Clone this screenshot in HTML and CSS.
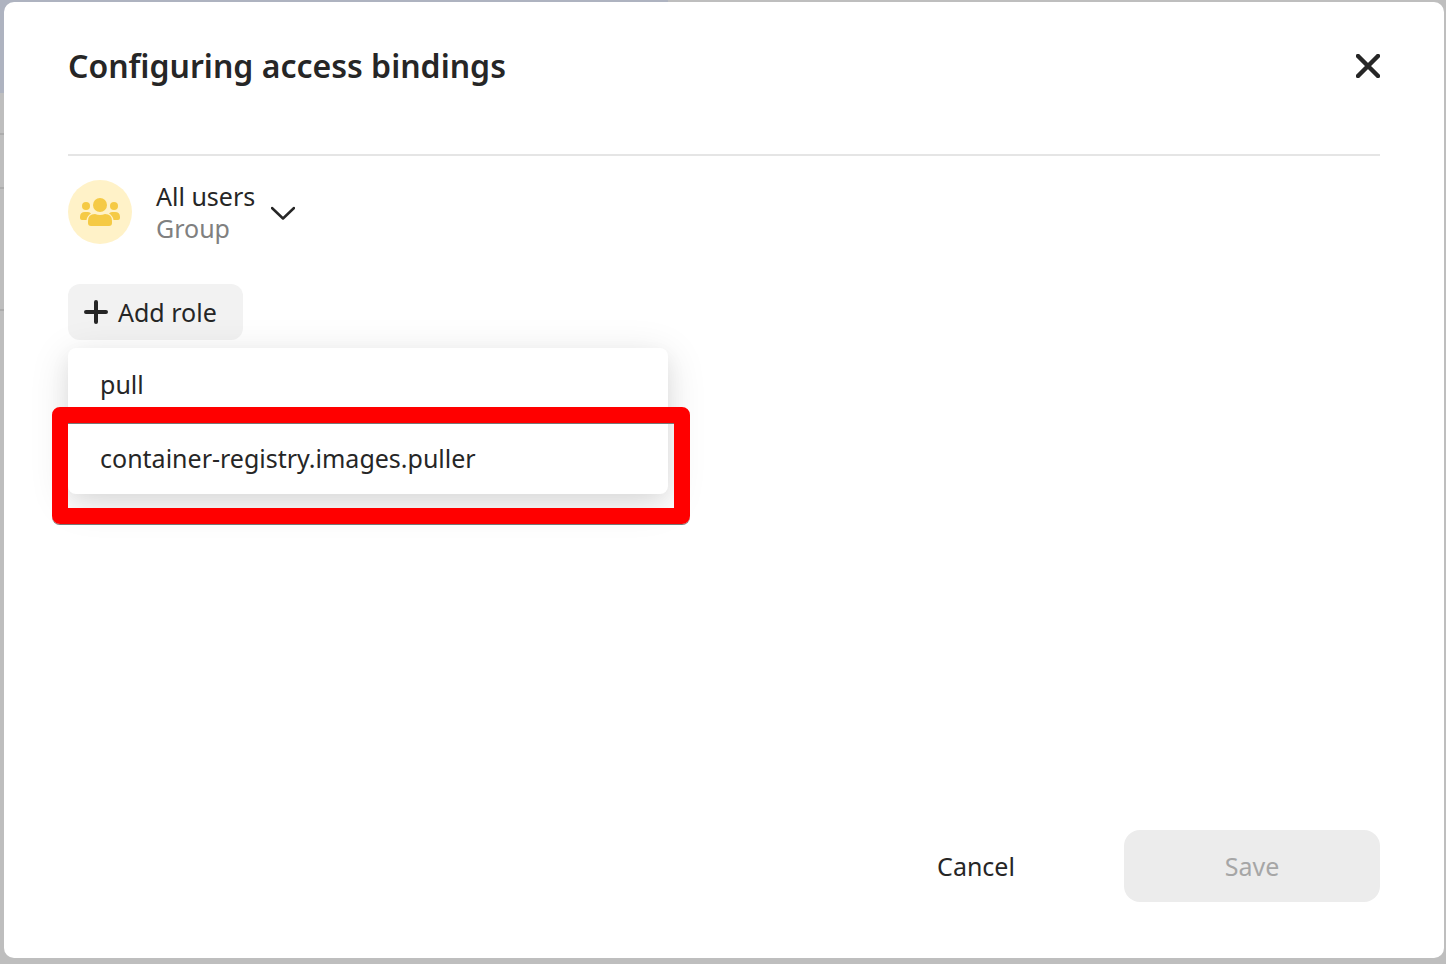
FILE: index.html
```html
<!DOCTYPE html>
<html lang="en">
<head>
<meta charset="utf-8">
<meta name="viewport" content="width=device-width, initial-scale=1">
<title>Configuring access bindings</title>
<link rel="stylesheet" href="styles.css">
</head>
<body>
<div class="backdrop" aria-hidden="true">
  <div class="backdrop-banner"></div>
  <div class="backdrop-row backdrop-row-short"></div>
  <div class="backdrop-row"></div>
  <div class="backdrop-row backdrop-row-tall"></div>
</div>
<main class="dialog" role="dialog" aria-labelledby="dialog-title">
  <header class="dialog-header">
    <h1 class="dialog-title" id="dialog-title">Configuring access bindings</h1>
    <button class="close" type="button" aria-label="Close">
      <svg width="24" height="24" viewBox="0 0 24 24" fill="none" stroke="currentColor" stroke-width="4.500" stroke-linecap="round"><path d="M2 2 22 22M22 2 2 22"/></svg>
    </button>
  </header>
  <section class="dialog-body">
    <button class="subject" type="button">
      <span class="avatar">
        <svg width="40" height="28" viewBox="0 0 40 28" fill="currentColor">
          <circle cx="6" cy="8" r="4"/><circle cx="34" cy="8" r="4"/><circle cx="20" cy="7" r="7"/>
          <path d="M5 14h3q2 0 3 1.500Q7 18 6.500 22H2q-2 0-2-2v-1q0-5 5-5Z"/>
          <path d="M35 14h-3q-2 0-3 1.500Q33 18 33.500 22H38q2 0 2-2v-1q0-5-5-5Z"/>
          <path d="M15 16q5 2 10 0 7 0 7 7v2q0 3-3 3H11q-3 0-3-3v-2q0-7 7-7Z"/>
        </svg>
      </span>
      <span class="subject-text">
        <span>All users</span>
        <span class="subject-kind">Group</span>
      </span>
      <svg class="chevron" width="24" height="18" viewBox="0 0 24 18" fill="none" stroke="currentColor" stroke-width="2.500" stroke-linecap="round" stroke-linejoin="round"><path d="M1 5 12 15.500 23 5"/></svg>
    </button>
    <div class="role-picker">
      <button class="add-role" type="button" aria-haspopup="menu" aria-expanded="true">
        <svg width="24" height="24" viewBox="0 0 24 24" fill="none" stroke="currentColor" stroke-width="4" stroke-linecap="round"><path d="M12 2v20M2 12h20"/></svg>
        Add role
      </button>
      <div class="menu" role="menu">
        <button class="menu-item" type="button" role="menuitem">pull</button>
        <button class="menu-item highlighted" type="button" role="menuitem">container-registry.images.puller</button>
      </div>
    </div>
  </section>
  <footer class="dialog-footer">
    <button class="action" type="button">Cancel</button>
    <button class="action action-save" type="button" disabled>Save</button>
  </footer>
</main>
</body>
</html>
```

FILE: styles.css
```css
* { box-sizing: border-box; }

body {
  margin: 0;
  min-height: 100vh;
  display: flex;
  padding: 2px 2px 6px 4px;
  background: #bebebe;
  color: #262626;
  font: 25px/32px "Noto Sans", "Open Sans", sans-serif;
}

button {
  margin: 0;
  padding: 0;
  border: 0;
  background: none;
  color: inherit;
  font: inherit;
  cursor: pointer;
}

svg { display: block; flex: none; }

/* Page dimmed behind the dialog */
.backdrop {
  position: absolute;
  inset: 0;
  z-index: -1;
  overflow: hidden;
}
.backdrop-banner { width: 668px; height: 93px; background: #aeb3c0; }
.backdrop-row { width: 668px; height: 54px; border-bottom: 2px solid #acacac; }
.backdrop-row-short { height: 42px; }
.backdrop-row-tall { height: 122px; }

.dialog {
  flex: 1;
  display: flex;
  flex-direction: column;
  padding: 32px 64px 56px;
  border-radius: 10px;
  background: #fff;
}

.dialog-header {
  display: flex;
  align-items: center;
  justify-content: space-between;
  padding-bottom: 56px;
  border-bottom: 2px solid #e5e5e5;
}
.dialog-title {
  margin: 0;
  font-size: 32px;
  font-weight: 600;
  line-height: 64px;
}

.dialog-body { flex: 1; padding-top: 24px; }

.subject { display: flex; align-items: center; text-align: left; }
.avatar {
  display: grid;
  place-items: center;
  width: 64px;
  height: 64px;
  margin-right: 24px;
  border-radius: 50%;
  background: #fff2c8;
  color: #f5ca45;
}
.subject-text { display: flex; flex-direction: column; }
.subject-kind { color: #808080; }
.chevron { margin-left: 16px; }

.role-picker { position: relative; margin-top: 40px; }
.add-role {
  display: flex;
  align-items: center;
  gap: 10px;
  height: 56px;
  padding: 0 26px 0 16px;
  border-radius: 12px;
  background: #f2f2f2;
}
.menu {
  position: absolute;
  top: 64px;
  left: 0;
  display: flex;
  flex-direction: column;
  gap: 2px;
  width: 600px;
  border-radius: 8px;
  background: #fff;
  box-shadow: 0 8px 40px rgba(0, 0, 0, 0.12), 0 8px 20px rgba(0, 0, 0, 0.06);
}
.menu-item { height: 72px; padding: 0 32px; text-align: left; }

.highlighted { position: relative; }
.highlighted::after {
  content: "";
  position: absolute;
  inset: -15px -22px -30px -16px;
  border: 16px solid #f00;
  border-radius: 8px;
  box-shadow: inset 0 1px #777, 0 1px #777;
  pointer-events: none;
}

.dialog-footer { display: flex; justify-content: flex-end; gap: 20px; }
.action { width: 256px; height: 72px; border-radius: 16px; }
.action-save { background: #ececec; color: #a6a6a6; cursor: default; }
```
